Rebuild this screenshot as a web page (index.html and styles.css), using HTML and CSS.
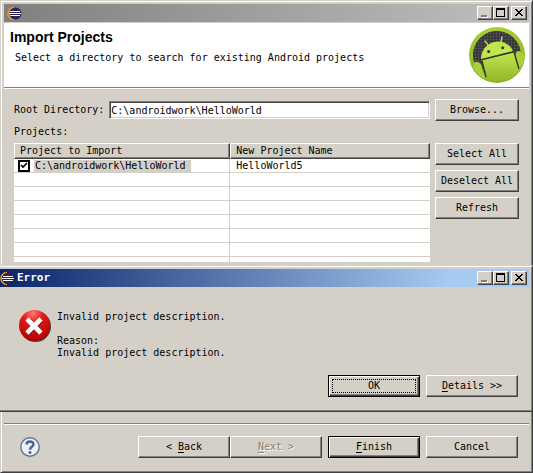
FILE: index.html
```html
<!DOCTYPE html>
<html lang="en">
<head>
  <meta charset="UTF-8">
  <meta name="viewport" content="width=device-width, initial-scale=1.0">
  <title>Import Projects</title>
  <link rel="stylesheet" href="styles.css">
</head>
<body>
  <!-- Icons used more than once -->
  <svg class="sprite" aria-hidden="true">
    <symbol id="eclipse" viewBox="0 0 16 16">
      <path d="M7 2.500A6 6 0 0 0 7 14.500" fill="none" stroke="#f7941e" stroke-width="1.600"/>
      <circle cx="8.500" cy="8.500" r="6" fill="#2c2255"/>
      <path d="M3 6.500h10M2 8.500h12M3 10.500h10" stroke="#fff"/>
    </symbol>
    <symbol id="minimize" viewBox="0 0 12 10">
      <path d="M3 8h6v2H3z" fill="#fff"/>
      <path d="M2 7h6v2H2z" fill="#808080"/>
    </symbol>
    <symbol id="maximize" viewBox="0 0 12 10">
      <path d="M1 0h9v9H1zM2 2v6h7V2z" fill="#000" fill-rule="evenodd"/>
    </symbol>
    <symbol id="close" viewBox="0 0 12 10">
      <path d="M2 1h2v1h1v1h2V2h1V1h2v1H9v1H8v1H7v1h1v1h1v1h1v1H8V7H7V6H5v1H4v1H2V7h1V6h1V5h1V4H4V3H3V2H2z" fill="#000"/>
    </symbol>
  </svg>

  <main class="window">
    <div class="titlebar inactive">
      <svg class="app-icon"><use href="#eclipse"/></svg>
      <div class="caption-buttons">
        <button class="caption" aria-label="Minimize"><svg><use href="#minimize"/></svg></button>
        <button class="caption" aria-label="Maximize"><svg><use href="#maximize"/></svg></button>
        <button class="caption close" aria-label="Close"><svg><use href="#close"/></svg></button>
      </div>
    </div>

    <header class="banner">
      <div class="banner-text">
        <h1>Import Projects</h1>
        <p>Select a directory to search for existing Android projects</p>
      </div>
      <svg class="android" viewBox="0 0 56 56" aria-hidden="true">
        <defs>
          <linearGradient id="rim" x1="0" y1="0" x2="0" y2="1">
            <stop offset="0" stop-color="#a8cf38"/>
            <stop offset="1" stop-color="#88ab22"/>
          </linearGradient>
          <linearGradient id="robot" x1="0" y1="0" x2="0" y2="1">
            <stop offset="0" stop-color="#c0e84e"/>
            <stop offset="1" stop-color="#8fb326"/>
          </linearGradient>
          <pattern id="mesh" width="3" height="3" patternUnits="userSpaceOnUse">
            <rect width="3" height="3" fill="#343434"/>
            <path d="M0 0h3M0 0v3" stroke="#5c5c5c"/>
          </pattern>
          <clipPath id="disc"><circle cx="28" cy="28" r="27"/></clipPath>
        </defs>
        <circle cx="28" cy="28" r="28" fill="url(#rim)"/>
        <path d="M4.800 34.200A24 24 0 1 1 51.900 26L45 40L14 46z" fill="url(#mesh)"/>
        <g clip-path="url(#disc)">
          <path d="M13 33L45 25L53 56H16z" fill="url(#robot)"/>
          <path d="M4 40Q5 34 9 35Q12 36 13 40L17 56H0z" fill="#a9d03c"/>
          <path d="M46 30Q46 24 50 24Q54 25 56 32L56 56L51 50z" fill="#a9d03c"/>
          <path d="M13 34L17 50M45 25L50 42" stroke="#33371f" stroke-width="1.400"/>
        </g>
        <path d="M12 32C12 24 17 17 25 15C33 13 41 17 44 24z" fill="#c0e84e"/>
        <path d="M12 33L45 25" stroke="#33371f" stroke-width="1.200"/>
        <path d="M19 18L16 14M32 15L33 10" stroke="#b7df49" stroke-width="1.400" stroke-linecap="round"/>
        <circle cx="19.700" cy="24.500" r="1.500" fill="#343434"/>
        <circle cx="33.700" cy="20.700" r="1.500" fill="#343434"/>
      </svg>
    </header>

    <form class="form">
      <div class="directory">
        <label for="root">Root Directory:</label>
        <input id="root" class="textbox" type="text" value="C:\androidwork\HelloWorld">
      </div>
      <button class="btn" type="button">Browse...</button>

      <div class="list-label" id="projects-label">Projects:</div>

      <div class="list">
        <table aria-labelledby="projects-label">
          <thead>
            <tr><th>Project to Import</th><th>New Project Name</th></tr>
          </thead>
          <tbody>
            <tr>
              <td class="check-cell">
                <label class="project"><input type="checkbox" checked><span>C:\androidwork\HelloWorld</span></label>
              </td>
              <td>HelloWorld5</td>
            </tr>
            <tr><td></td><td></td></tr>
            <tr><td></td><td></td></tr>
            <tr><td></td><td></td></tr>
            <tr><td></td><td></td></tr>
            <tr><td></td><td></td></tr>
            <tr><td></td><td></td></tr>
            <tr class="partial"><td></td><td></td></tr>
          </tbody>
        </table>
      </div>
      <div class="list-buttons">
        <button class="btn" type="button">Select All</button>
        <button class="btn" type="button">Deselect All</button>
        <button class="btn" type="button">Refresh</button>
      </div>
    </form>

    <footer class="wizard-footer">
      <button class="help" aria-label="Help">
        <svg viewBox="0 0 20 20">
          <circle cx="10" cy="10" r="9.200" fill="#eef1f5" stroke="#5b7496" stroke-width="1.400"/>
          <path d="M6.500 7.500C6.500 3.500 13.500 3.500 13.500 7.300C13.500 9.800 10 9.800 10 12.700" fill="none" stroke="#4a638c" stroke-width="2.400"/>
          <circle cx="10" cy="15.500" r="1.500" fill="#4a638c"/>
        </svg>
      </button>
      <div class="back-next">
        <button class="btn wide">&lt; <u>B</u>ack</button>
        <button class="btn wide" disabled><u>N</u>ext &gt;</button>
      </div>
      <button class="btn wide default"><u>F</u>inish</button>
      <button class="btn wide">Cancel</button>
    </footer>
  </main>

  <!-- Error dialog on top of the wizard -->
  <section class="dialog" role="alertdialog" aria-labelledby="error-title">
    <div class="titlebar active">
      <svg class="app-icon"><use href="#eclipse"/></svg>
      <h2 id="error-title">Error</h2>
      <div class="caption-buttons">
        <button class="caption" aria-label="Minimize"><svg><use href="#minimize"/></svg></button>
        <button class="caption" aria-label="Maximize"><svg><use href="#maximize"/></svg></button>
        <button class="caption close" aria-label="Close"><svg><use href="#close"/></svg></button>
      </div>
    </div>
    <div class="message">
      <svg class="error-icon" viewBox="0 0 32 32" aria-hidden="true">
        <defs>
          <radialGradient id="red" cx="45%" cy="10%" r="90%">
            <stop offset="0" stop-color="#ff7a70"/>
            <stop offset="0.350" stop-color="#e41c1c"/>
            <stop offset="1" stop-color="#b00000"/>
          </radialGradient>
        </defs>
        <circle cx="16.500" cy="16.500" r="15.500" fill="#4b3a38"/>
        <circle cx="15.500" cy="15.500" r="15.500" fill="url(#red)"/>
        <path d="M9 10L22 23M22 10L9 23" stroke="#7d0000" stroke-width="5"/>
        <path d="M8 9L22 23M22 9L8 23" stroke="#fff" stroke-width="4.600"/>
      </svg>
      <div class="message-text">
        <p>Invalid project description.</p>
        <p class="reason">Reason:<br>Invalid project description.</p>
      </div>
    </div>
    <div class="dialog-buttons">
      <button class="btn wide default focused">OK</button>
      <button class="btn wide"><u>D</u>etails &gt;&gt;</button>
    </div>
  </section>
</body>
</html>
```
FILE: styles.css
```css
* {
  box-sizing: border-box;
}
body {
  margin: 0;
  position: relative;
  background: #d4d0c8;
  color: #000;
  font-family: "DejaVu Sans Mono", monospace;
  font-size: 10px;
  line-height: 12px;
}
h1, h2, p {
  margin: 0;
}
button, input {
  font: inherit;
  color: inherit;
}
.sprite {
  display: none;
}

/* Windows */
.window {
  display: flex;
  flex-direction: column;
  min-height: 100vh;
  padding: 2px;
  border: 1px solid #d4d0c8;
  border-right-color: #404040;
  border-bottom-color: #404040;
  box-shadow: inset 1px 1px #fff, inset -1px -1px #808080;
}
.window, .dialog {
  background: #d4d0c8;
}
.window > * {
  margin: 0 1px;
}
.dialog {
  position: absolute;
  top: 265px;
  left: 0;
  right: 0;
  padding: 2px 2px 2px 0;
  border: 1px solid #d4d0c8;
  border-left: none;
  border-right-color: #404040;
  border-bottom-color: #404040;
  box-shadow: inset 0 1px #fff, inset -1px -1px #808080;
}
.titlebar {
  display: flex;
  align-items: center;
  height: 18px;
  margin-top: 1px;
  padding-right: 2px;
}
.inactive {
  padding-left: 3px;
  background: linear-gradient(to right, #808080, #c0c0c0);
}
.active {
  margin-right: 1px;
  background: linear-gradient(to right, #0a246a, #a6caf0 85%);
}
.titlebar h2 {
  margin-left: 1px;
  color: #fff;
  font-size: 11px;
}
.app-icon {
  width: 16px;
  height: 16px;
}
.caption-buttons {
  display: flex;
  margin-left: auto;
}
.caption {
  width: 16px;
  height: 14px;
  padding: 1px 1px;
  border: 1px solid #fff;
  border-right-color: #404040;
  border-bottom-color: #404040;
  background: #d4d0c8;
  box-shadow: inset -1px -1px #808080;
}
.caption svg {
  display: block;
  width: 12px;
  height: 10px;
  shape-rendering: crispEdges;
}
.caption.close {
  margin-left: 2px;
}

/* Banner */
.window .banner {
  display: flex;
  justify-content: space-between;
  margin-top: 1px;
  padding: 4px 4px 4px 6px;
  border-bottom: 1px solid #808080;
  background: #fff;
  box-shadow: 0 1px #fff;
}
.banner-text {
  padding-top: 2px;
}
.banner h1 {
  font-family: "Liberation Sans", Arial, sans-serif;
  font-size: 14px;
  line-height: 16px;
}
.banner p {
  margin: 7px 0 0 5px;
}
.android {
  width: 56px;
  height: 56px;
}

/* Form */
.form {
  display: grid;
  grid-template-columns: 1fr 84px;
  column-gap: 5px;
  padding: 11px 10px 0;
}
.directory {
  display: flex;
  align-items: center;
  gap: 5px;
}
.textbox {
  flex: 1;
  min-width: 0;
  height: 18px;
  padding: 0 1px;
  border: 1px solid #808080;
  border-right-color: #fff;
  border-bottom-color: #fff;
  border-radius: 0;
  background: #fff;
  box-shadow: inset 1px 1px #404040, inset -1px -1px #d4d0c8;
  outline: none;
}
.list-label {
  grid-column: 1 / -1;
  line-height: 22px;
}
.list {
  background: #fff;
}
table {
  width: 100%;
  border-collapse: separate;
  border-spacing: 0;
  table-layout: fixed;
}
th {
  height: 16px;
  padding: 0 5px;
  border: 1px solid #fff;
  border-right-color: #404040;
  border-bottom-color: #404040;
  background: #d4d0c8;
  box-shadow: inset -1px -1px #808080;
  font-weight: normal;
  text-align: left;
}
th:first-child {
  width: 52%;
}
td {
  height: 14px;
  padding: 0 5px;
  border-right: 1px solid #d4d0c8;
  border-bottom: 1px solid #d4d0c8;
}
td:last-child {
  padding-left: 6px;
  border-right: none;
}
td.check-cell {
  padding: 0 4px;
}
.partial td {
  height: 5px;
  border-bottom: none;
}
.project {
  display: flex;
  gap: 4px;
}
.project span {
  padding: 0 5px 0 1px;
  background: #d4d0c8;
}
.project input {
  appearance: none;
  width: 12px;
  height: 12px;
  margin: 0;
  border: 2px solid #000;
  background: #fff;
}
.project input:checked {
  background-image: url("data:image/svg+xml,%3Csvg xmlns='http://www.w3.org/2000/svg' viewBox='0 0 8 8'%3E%3Cpath d='M1 3L3 5L7 1' fill='none' stroke='black' stroke-width='1.6'/%3E%3C/svg%3E");
}
.list-buttons {
  display: flex;
  flex-direction: column;
  gap: 5px;
}

/* Buttons */
.btn {
  height: 22px;
  padding: 0;
  border: 1px solid #fff;
  border-right-color: #404040;
  border-bottom-color: #404040;
  background: #d4d0c8;
  box-shadow: inset -1px -1px #808080;
  text-align: center;
  white-space: pre;
}
.btn.wide {
  width: 92px;
}
.btn.default {
  border-color: #000;
  box-shadow: inset 1px 1px #fff, inset -1px -1px #404040, inset -2px -2px #808080;
}
.btn.focused {
  outline: 1px dotted #000;
  outline-offset: -5px;
}
.btn:disabled {
  color: #808080;
  text-shadow: 1px 1px #fff;
}
u {
  text-underline-offset: 2px;
}

/* Footer */
.wizard-footer {
  display: flex;
  align-items: center;
  gap: 6px;
  margin-top: auto;
  padding: 12px 11px 12px 16px;
  border-top: 1px solid #808080;
  box-shadow: inset 0 1px #fff;
}
.back-next {
  display: flex;
  margin-left: auto;
}
.help {
  width: 20px;
  height: 20px;
  padding: 0;
  border: none;
  background: none;
}
.help svg {
  display: block;
}

/* Error dialog */
.message {
  display: flex;
  gap: 6px;
  padding: 23px 19px 0;
}
.message-text {
  padding-top: 1px;
}
.error-icon {
  width: 32px;
  height: 32px;
}
.reason {
  margin-top: 12px;
}
.dialog-buttons {
  display: flex;
  justify-content: flex-end;
  gap: 6px;
  padding: 16px 12px 12px;
}
```
